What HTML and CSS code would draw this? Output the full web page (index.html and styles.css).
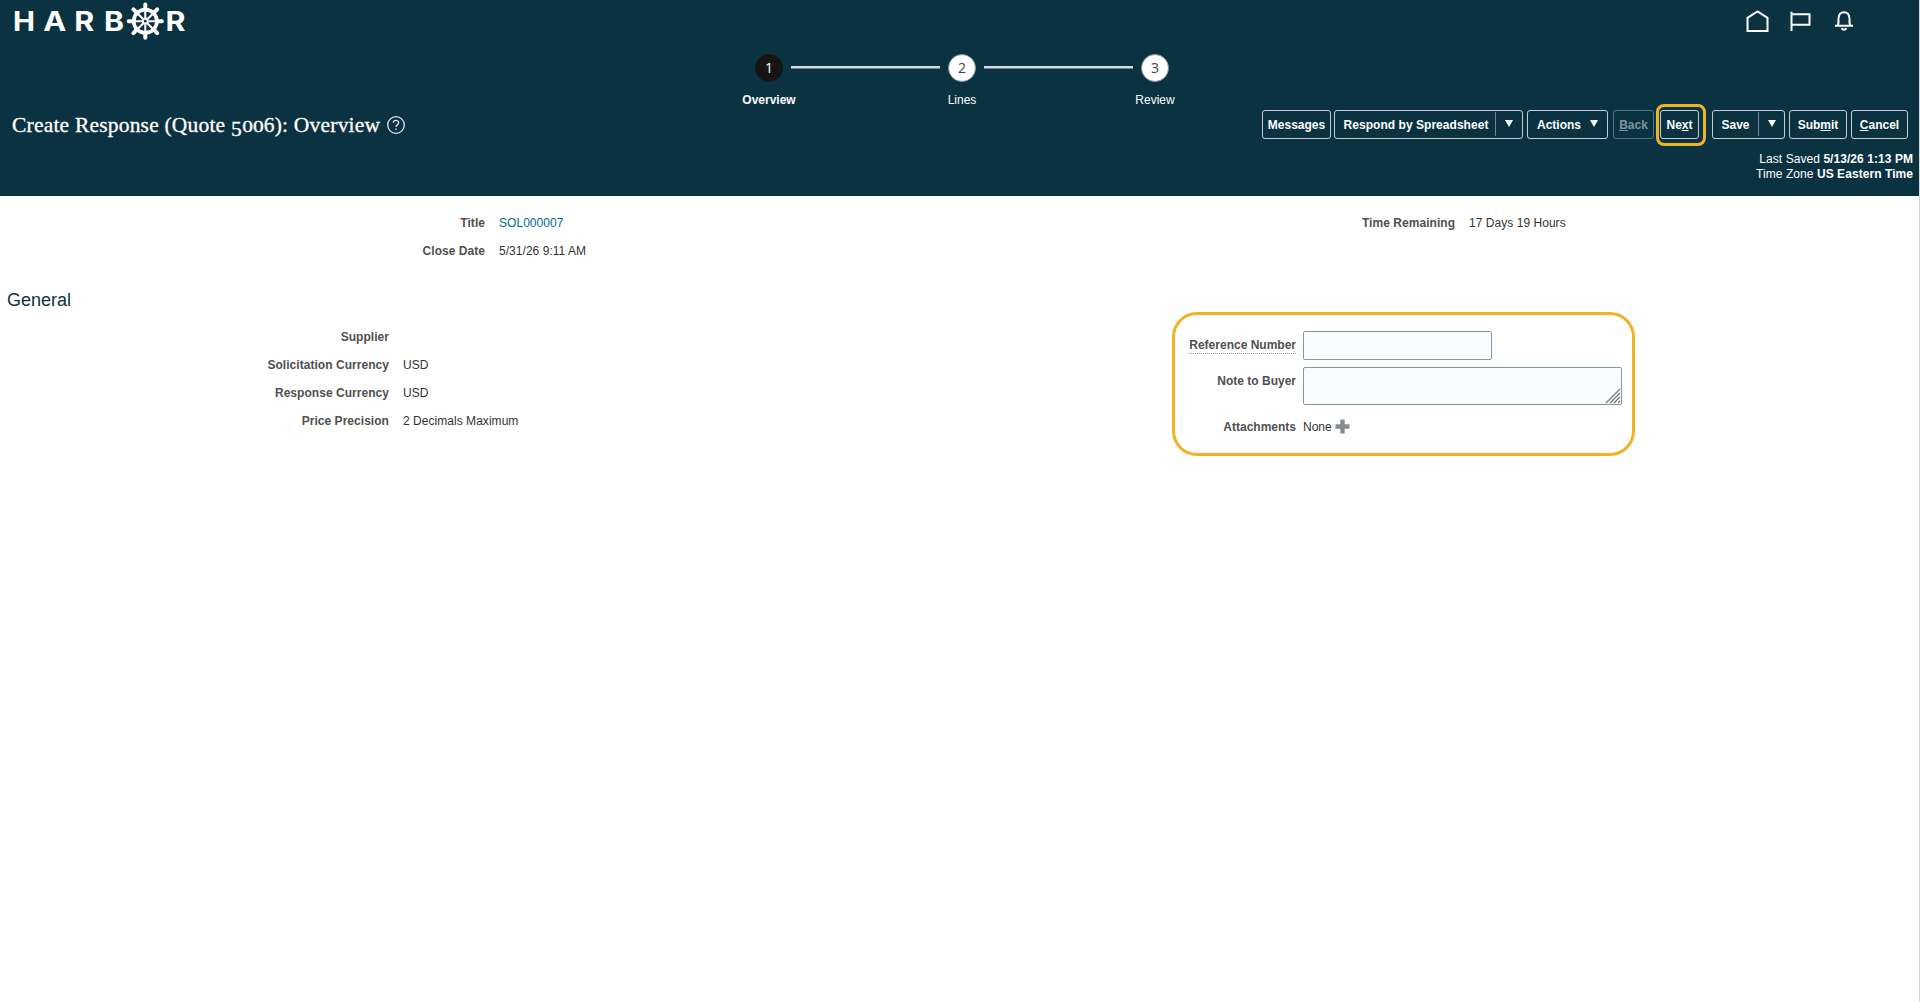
FILE: index.html
```html
<!DOCTYPE html>
<html lang="en">
<head>
  <meta charset="UTF-8">
  <meta name="viewport" content="width=device-width, initial-scale=1.0">
  <title>Create Response (Quote 5006): Overview</title>
  <link rel="stylesheet" href="styles.css">
</head>
<body>

  <header class="header">
    <div class="topbar">
      <svg class="logo" width="180" height="42" viewBox="0 0 180 42">
        <g class="logo-text">
          <text x="1" y="31" textLength="22" lengthAdjust="spacingAndGlyphs">H</text>
          <text x="31.2" y="31" textLength="23" lengthAdjust="spacingAndGlyphs">A</text>
          <text x="62.3" y="31" textLength="20" lengthAdjust="spacingAndGlyphs">R</text>
          <text x="92" y="31" textLength="20" lengthAdjust="spacingAndGlyphs">B</text>
          <text x="153.5" y="31" textLength="20" lengthAdjust="spacingAndGlyphs">R</text>
        </g>
        <g transform="translate(133.3 21.2)" fill="none" stroke="#fff">
          <circle r="11.6" stroke-width="3.6"/>
          <circle r="2.4" stroke-width="2"/>
          <g stroke-width="2.1">
            <path d="M-12 0H-3M3 0H12M0-12V-3M0 3V12M-8.5-8.5L-2-2M2 2L8.5 8.5M-8.5 8.5L-2 2M2-2L8.5-8.5"/>
          </g>
          <g stroke-width="4" stroke-linecap="round">
            <path d="M-12 0H-16.6M12 0H16.6M0-12V-16.6M0 12V16.6M-9-9L-11.9-11.9M9 9L11.9 11.9M-9 9L-11.9 11.9M9-9L11.9-11.9"/>
          </g>
        </g>
      </svg>
      <nav class="tools">
        <svg width="24" height="24" viewBox="0 0 24 24"><path d="M2.5 22V8.800L12.500 2.500l10 6.300V22Z"/></svg>
        <svg width="24" height="24" viewBox="0 0 24 24"><path d="M2.500 2.800V22M2.500 5.200H20.500V15.800H2.500"/></svg>
        <svg width="24" height="24" viewBox="0 0 24 24"><path d="M3 16.700H21M5.800 16.500C7 14.500 6.300 12 6.500 9.500C6.700 5.600 8.800 3.300 12 3.300C15.200 3.300 17.300 5.600 17.500 9.500C17.700 12 17 14.500 18.200 16.500M9.500 19.200Q12 22.400 14.500 19.200"/></svg>
      </nav>
    </div>

    <ol class="train">
      <li class="stop current"><span class="dot">1</span><span class="stop-label">Overview</span></li>
      <li class="rail"></li>
      <li class="stop"><span class="dot">2</span><span class="stop-label">Lines</span></li>
      <li class="rail"></li>
      <li class="stop"><span class="dot">3</span><span class="stop-label">Review</span></li>
    </ol>

    <div class="titlebar">
      <h1>Create Response (Quote <span class="low">5</span><span class="small">00</span>6): Overview</h1>
      <svg class="help" width="20" height="20" viewBox="0 0 20 20">
        <circle cx="10" cy="10" r="8.300"/>
        <path d="M7.300 7.800C7.300 4.500 12.700 4.500 12.700 7.700C12.700 9.600 10 9.700 10 12"/>
        <path d="M10 13.500V15"/>
      </svg>
      <div class="actions">
        <button class="btn messages">Messages</button>
        <button class="btn respond"><span>Respond by Spreadsheet</span><i class="sep"></i><i class="arrow"></i></button>
        <button class="btn more"><span>Actions</span><i class="arrow"></i></button>
        <button class="btn back" disabled><span><u>B</u>ack</span></button>
        <div class="highlight"><button class="btn next"><span>Ne<u>x</u>t</span></button></div>
        <button class="btn save"><span>Save</span><i class="sep"></i><i class="arrow"></i></button>
        <button class="btn submit"><span>Sub<u>m</u>it</span></button>
        <button class="btn cancel"><span><u>C</u>ancel</span></button>
      </div>
    </div>

    <div class="meta">
      <div>Last Saved <b>5/13/26 1:13 PM</b></div>
      <div>Time Zone <b>US Eastern Time</b></div>
    </div>
  </header>

  <main>
    <section class="summary">
      <dl class="fields summary-left">
        <dt>Title</dt><dd><a href="#">SOL000007</a></dd>
        <dt>Close Date</dt><dd>5/31/26 9:11 AM</dd>
      </dl>
      <dl class="fields summary-right">
        <dt>Time Remaining</dt><dd>17 Days 19 Hours</dd>
      </dl>
    </section>

    <h2>General</h2>
    <section class="general">
      <dl class="fields general-left">
        <dt>Supplier</dt><dd></dd>
        <dt>Solicitation Currency</dt><dd>USD</dd>
        <dt>Response Currency</dt><dd>USD</dd>
        <dt>Price Precision</dt><dd>2 Decimals Maximum</dd>
      </dl>
      <form class="response">
        <label for="ref"><span class="hint">Reference Number</span></label>
        <input id="ref" type="text">
        <label for="note">Note to Buyer</label>
        <div class="note-wrap">
          <textarea id="note"></textarea>
          <svg class="grip" width="16" height="16" viewBox="0 0 16 16"><path d="M1 15L15 1M5 15L15 5M9 15L15 9M13 15L15 13"/></svg>
        </div>
        <label>Attachments</label>
        <div class="attach">None <svg width="15" height="15" viewBox="0 0 15 15"><path d="M5.300 0.500H9.700V5.300H14.500V9.700H9.700V14.500H5.300V9.700H0.500V5.300H5.300Z"/></svg></div>
      </form>
    </section>
  </main>

</body>
</html>
```
FILE: styles.css
```css
* {
  box-sizing: border-box;
}

body {
  margin: 0;
  height: 1002px;
  overflow: hidden;
  border-right: 1px solid #d5d8da;
  background-color: #fff;
  font-family: "Liberation Sans", Arial, sans-serif;
  font-size: 12px;
  color: #333;
}

h1, h2, dl, dd, ol {
  margin: 0;
  padding: 0;
  font-weight: normal;
}

/* Header */
.header {
  height: 196px;
  background-color: #0b3241;
  color: #fff;
}

.topbar {
  display: flex;
  justify-content: space-between;
  height: 54px;
  padding: 0 63px 0 12px;
}

.logo-text {
  font-family: Inter, sans-serif;
  font-weight: 700;
  font-size: 26.5px;
  fill: #fff;
}

.tools {
  display: flex;
  gap: 19.5px;
  padding-top: 9px;
}

.tools svg {
  fill: none;
  stroke: #fff;
  stroke-width: 2;
}

.train {
  display: flex;
  justify-content: center;
  height: 56px;
  padding-left: 5px;
  list-style: none;
}

.stop {
  display: flex;
  flex-direction: column;
  align-items: center;
  width: 44px;
}

.dot {
  width: 28px;
  height: 28px;
  border-radius: 50%;
  border: 1px solid #8c9499;
  background-color: #fff;
  color: #444;
  font-family: "Open Sans", sans-serif;
  font-size: 14px;
  line-height: 25px;
  text-align: center;
}

.current .dot {
  border-color: #161513;
  background-color: #161513;
  color: #fff;
}

.stop-label {
  margin-top: 11px;
  line-height: 14px;
}

.current .stop-label {
  font-weight: bold;
}

.rail {
  width: 149px;
  height: 3px;
  margin-top: 12px;
  border-bottom: 1px solid #6d858e;
  background-color: #d3dce0;
}

.titlebar {
  display: flex;
  height: 40px;
  padding: 0 11px 0 12px;
}

h1 {
  width: 369px;
  padding-top: 1px;
  font-family: Georgia, "Liberation Serif", serif;
  font-size: 21.5px;
  line-height: 29px;
  letter-spacing: 0.2px;
  white-space: nowrap;
  -webkit-text-stroke: 0.3px #fff;
}

/* old-style figures */
.low {
  position: relative;
  top: 4px;
}

.small {
  display: inline-block;
  font-size: 0.74em;
  line-height: 1;
  transform: scaleX(1.35);
  margin: 0 3px;
  letter-spacing: 0;
}

.help {
  margin: 5px 0 0 5px;
  fill: none;
  stroke: #dfe5e8;
  stroke-width: 1.3;
}

.actions {
  display: flex;
  margin-left: auto;
}

.btn {
  display: flex;
  align-items: center;
  justify-content: center;
  flex: none;
  height: 29px;
  padding: 1px 0 0;
  border: 1px solid #c5ced2;
  border-radius: 3px;
  background: none;
  color: #fff;
  font: bold 12px "Liberation Sans", Arial, sans-serif;
  white-space: nowrap;
}

.btn u {
  text-underline-offset: 1px;
}

.sep {
  width: 1px;
  height: 24px;
  margin-top: -3px;
  background-color: #6f868f;
}

.arrow {
  border: 4.5px solid transparent;
  border-top: 7px solid #fff;
  border-bottom: 0;
  margin-top: -4px;
}

.messages {
  width: 69px;
  margin-right: 3px;
}

.respond {
  width: 189px;
  margin-right: 4px;
  letter-spacing: 0.04px;
}

.respond .sep {
  margin-left: 7px;
  margin-right: 9px;
}

.more {
  width: 81px;
  gap: 9px;
  margin-right: 5px;
}

.back {
  width: 41px;
  border-color: #51707c;
  color: #7f939b;
  margin-right: 2px;
}

.highlight {
  width: 50px;
  height: 42px;
  margin: -6px 6px 0 0;
  padding: 3px 0 0 1px;
  border: 3px solid #efb323;
  border-radius: 8px;
}

.next {
  width: 39px;
}

.save {
  width: 73px;
  margin-right: 4px;
}

.save .sep {
  margin-left: 8px;
  margin-right: 9px;
}

.submit {
  width: 58px;
  margin-right: 4px;
}

.cancel {
  width: 57px;
}

.meta {
  padding: 2px 6px 0 0;
  line-height: 15px;
  letter-spacing: 0.06px;
  text-align: right;
}

/* Read-only fields */
.fields {
  display: grid;
  grid-auto-rows: 28px;
  column-gap: 14px;
  line-height: 28px;
  letter-spacing: 0.04px;
  align-content: start;
}

dt, label {
  font-weight: bold;
  color: #505050;
  text-align: right;
}

.fields a {
  color: #006b8f;
  text-decoration: none;
}

.summary {
  display: flex;
  height: 92px;
  padding-top: 13px;
}

.summary-left {
  grid-template-columns: 485px 1fr;
  width: 960px;
}

.summary-right {
  grid-template-columns: 495px 1fr;
  width: 959px;
}

h2 {
  padding-left: 7px;
  font-size: 18px;
  line-height: 24px;
  color: #0b3241;
}

.general {
  display: flex;
}

.general-left {
  grid-template-columns: 389px 1fr;
  width: 1172px;
  padding-top: 11px;
}

.response {
  display: grid;
  grid-template-columns: 121px 319px;
  grid-template-rows: 29px 39px 20px;
  gap: 7px;
  width: 463px;
  height: 144px;
  padding: 15.5px 0 0 0;
  border: 3px solid #efb323;
  border-radius: 25px;
}

.response label {
  line-height: 29px;
}

.hint {
  display: inline-block;
  line-height: 16px;
  border-bottom: 1px dotted #999;
}

input, textarea {
  display: block;
  margin: 0;
  border: 1px solid #8298a2;
  border-radius: 2px;
  background-color: #fbfcfe;
  outline: none;
}

input {
  width: 189px;
  height: 29px;
}

textarea {
  width: 319px;
  height: 38px;
  resize: none;
}

.note-wrap {
  position: relative;
}

.grip {
  position: absolute;
  right: 1px;
  bottom: 2px;
  fill: none;
  stroke: #77797c;
  stroke-width: 1.2;
}

.attach {
  display: flex;
  align-items: center;
  gap: 3px;
  height: 28px;
}

.attach svg {
  fill: #878c91;
}
```
